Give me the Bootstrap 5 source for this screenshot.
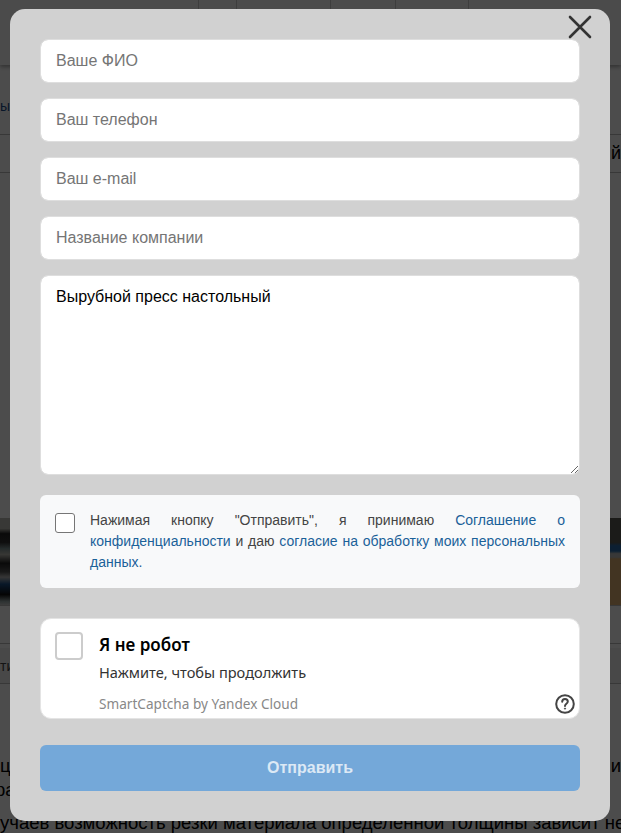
<!DOCTYPE html>
<html lang="ru">
<head>
<meta charset="utf-8">
<title>Заявка</title>
<link href="https://cdn.jsdelivr.net/npm/bootstrap@5.3.0/dist/css/bootstrap.min.css" rel="stylesheet">
<style>
html,body{height:833px;overflow:hidden}
body{background:#fff;font-family:"Liberation Sans",Arial,sans-serif;color:#000}
.pg-head{height:65px;background:#fbfbfb;box-shadow:0 2px 4px rgba(0,0,0,.35);position:relative;overflow:hidden}
.pg-cells{height:9px;padding-left:198px}
.pg-cell{border-left:1px solid #ccc;height:9px}
.pg-top-word{font-size:14px;line-height:16px;padding:5px 0 0 585px;color:#333}
.pg-crumb{height:70px;font-size:14px;color:#1a4a8a;padding-top:31px;border-bottom:1px solid #bbb}
.pg-tabs{height:38px;border-bottom:1px solid #bbb;font-size:18px;line-height:36px;text-align:right}
.pg-spacer{height:345px}
.pg-pics{height:88px;border-bottom:1px solid #bbb}
.pg-pic-l{width:10px;background:linear-gradient(180deg,#bdbdb5 0,#bdbdb5 12%,#222 18%,#333 28%,#7a8f8f 35%,#b8b8b0 42%,#222 52%,#555 62%,#b5b5b5 68%,#1d4f86 76%,#111 88%,#9aa 96%,#ccc 100%)}
.pg-pic-r{width:51px;background:linear-gradient(90deg,rgba(0,0,0,0) 40%,rgba(20,50,90,.85) 52%,rgba(20,50,90,.85) 60%,rgba(0,0,0,0) 70%) 0 60% / 100% 55% no-repeat,linear-gradient(180deg,#5a5a55 0,#5a5a55 28%,#2a6aa8 32%,#2a6aa8 38%,#bbb 41%,#bbb 45%,#dcae72 47%,#dcae72 100%)}
.pg-rule1{height:38px;border-bottom:1px solid #bbb}
.pg-rule2{height:36px;margin-top:4px;border-bottom:1px solid #bbb;background:#f1f1f1;font-size:14px;line-height:36px;color:#444}
.pg-text{font-size:18.5px;line-height:24px;padding-top:70px;white-space:nowrap;overflow:hidden;color:#000}
.pg-line{height:24px}
.pg-shift{margin-left:-5px}
.pg-para{margin-top:9px}
.pg-shade{position:fixed;inset:0;background:rgba(0,0,0,.7)}
.dlg{position:fixed;left:10px;top:9px;width:600px;height:812px;background:#d1d1d1;border-radius:15px;padding:30px}
.dlg-x{position:absolute;top:6px;right:18px;width:24px;height:24px;padding:0;border:0;background:none;line-height:0}
.dlg .form-control{font-family:"Liberation Sans",Arial,sans-serif;font-size:16px;color:#000;height:44px;padding:0 15px;border:1px solid #dedede;border-radius:8px;box-shadow:none}
.dlg .form-control::placeholder{color:#757575;opacity:1}
.dlg textarea.form-control{height:200px;padding:11px 15px 9px;line-height:20px}
.field-gap{margin-bottom:15px}
.consent{height:93px;margin-top:20px;background:#f8f9fa;border-radius:6px;padding:15px}
.consent .form-check-input{width:20px;height:20px;margin:3px 15px 0 0;flex:none;border:1px solid #767676;border-radius:3px}
.consent-text{font-size:14px;line-height:21px;text-align:justify;color:#444;margin:0}
.consent-text a{color:#1b6199;text-decoration:none}
.robot{height:101px;margin-top:30px;background:#fff;border:1px solid #e4e4e4;border-radius:11px;padding:13px 14px 0;position:relative;font-family:"Noto Sans",sans-serif}
.robot-box{width:28px;height:28px;border:2px solid #ccc;border-radius:4px;flex:none;margin-right:16px}
.robot-title{font-size:17px;line-height:24px;font-weight:600;color:#000;padding-top:1px}
.robot-sub{font-size:14.6px;line-height:20px;color:#333;margin-top:5px}
.robot-brand{font-size:13.6px;line-height:20px;color:#888;margin-top:12px}
.robot-help{position:absolute;right:4px;bottom:4px;line-height:0}
.send{height:46px;margin-top:26px;background:#74a8d9;border:0;border-radius:6px;font-size:16px;font-weight:700;color:rgba(255,255,255,.75)}
.send:hover{background:#74a8d9;color:rgba(255,255,255,.75)}
</style>
</head>
<body>
<header class="pg-head">
  <div class="pg-cells d-flex">
    <div class="pg-cell" style="width:38px"></div>
    <div class="pg-cell" style="width:94px"></div>
    <div class="pg-cell" style="width:65px"></div>
    <div class="pg-cell" style="width:73px"></div>
    <div class="pg-cell" style="width:85px"></div>
  </div>
  <div class="pg-top-word">ты</div>
</header>
<div class="pg-crumb">ы</div>
<div class="pg-tabs">й</div>
<div class="pg-spacer"></div>
<div class="pg-pics d-flex justify-content-between">
  <div class="pg-pic-l"></div>
  <div class="pg-pic-r"></div>
</div>
<div class="pg-rule1"></div>
<div class="pg-rule2">ти</div>
<div class="pg-text">
  <div class="pg-line d-flex justify-content-between"><span>ц</span><span>и</span></div>
  <div class="pg-line pg-shift">ра</div>
  <div class="pg-line pg-para">учаев возможность резки материала определенной толщины зависит не</div>
</div>

<div class="pg-shade"></div>

<div class="dlg" role="dialog" aria-modal="true">
  <button class="dlg-x" type="button" aria-label="Закрыть">
    <svg width="24" height="24" viewBox="0 0 24 24" fill="none" stroke="#333" stroke-width="2.6" stroke-linecap="round"><path d="M2 2 22 22M22 2 2 22"/></svg>
  </button>
  <form>
    <input class="form-control field-gap" type="text" placeholder="Ваше ФИО">
    <input class="form-control field-gap" type="text" placeholder="Ваш телефон">
    <input class="form-control field-gap" type="text" placeholder="Ваш e-mail">
    <input class="form-control field-gap" type="text" placeholder="Название компании">
    <textarea class="form-control">Вырубной пресс настольный</textarea>
    <div class="consent d-flex">
      <input class="form-check-input" type="checkbox" aria-label="Согласие">
      <p class="consent-text">Нажимая кнопку "Отправить", я принимаю <a href="#">Соглашение о конфиденциальности</a> и даю <a href="#">согласие на обработку моих персональных данных.</a></p>
    </div>
    <div class="robot d-flex">
      <div class="robot-box"></div>
      <div>
        <div class="robot-title">Я не робот</div>
        <div class="robot-sub">Нажмите, чтобы продолжить</div>
        <div class="robot-brand">SmartCaptcha by Yandex Cloud</div>
      </div>
      <div class="robot-help">
        <svg width="20" height="20" viewBox="0 0 20 20" fill="none" stroke="#444" stroke-width="2"><circle cx="10" cy="10" r="8.8"/><path d="M7.2 7.8c0-1.7 1.2-2.8 2.8-2.8s2.8 1 2.8 2.5c0 2.3-2.8 2.2-2.8 4.4" stroke-linecap="round"/><circle cx="10" cy="14.6" r=".6" fill="#444" stroke-width="1"/></svg>
      </div>
    </div>
    <button class="btn btn-primary send w-100" type="button">Отправить</button>
  </form>
</div>
</body>
</html>
